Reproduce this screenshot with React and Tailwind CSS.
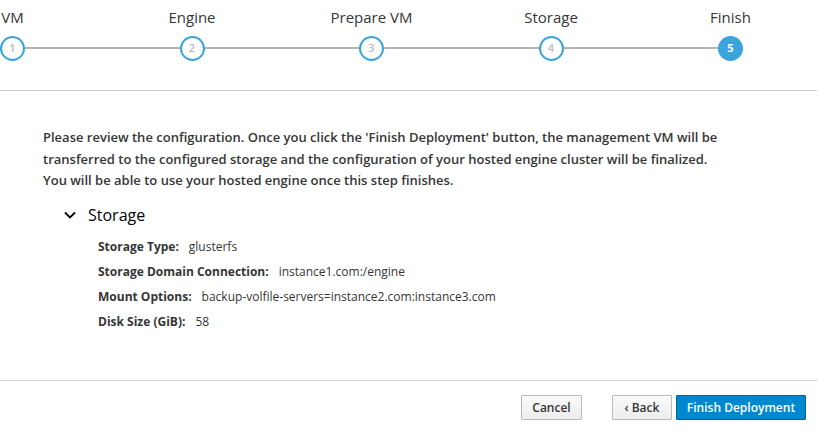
import React from "react";

const steps = ["VM", "Engine", "Prepare VM", "Storage", "Finish"];

function Step({ label, n, first, last, active }) {
  return (
    <div className="w-[179.5px] shrink-0 flex flex-col items-center">
      <div className="h-[20px] leading-[20px] text-[15px] text-[#363636] mt-[6.5px] whitespace-nowrap">{label}</div>
      <div className="w-full flex items-center mt-[9px]">
        <div className={`flex-1 h-[2px] ${first ? "bg-transparent" : "bg-[#b3b3b3]"}`} />
        {active ? (
          <div className="w-[25px] h-[25px] rounded-full bg-[#39a5dc] flex items-center justify-center text-white text-[11px] font-bold">
            {n}
          </div>
        ) : (
          <div className="w-[25px] h-[25px] rounded-full border-2 border-[#39a5dc] bg-white flex items-center justify-center text-[#bbbbbb] text-[11px] font-semibold">
            {n}
          </div>
        )}
        <div className={`flex-1 h-[2px] ${last ? "bg-transparent" : "bg-[#b3b3b3]"}`} />
      </div>
    </div>
  );
}

function Row({ label, value }) {
  return (
    <div className="h-[25px] flex items-center text-[12px] text-[#363636]">
      <span className="font-bold">{label}</span>
      <span className="ml-[10px]">{value}</span>
    </div>
  );
}

export default function App() {
  return (
    <div
      className="w-[817px] h-[433px] bg-white flex flex-col overflow-hidden"
      style={{ fontFamily: '"Open Sans", "Noto Sans", sans-serif' }}
    >
      <div className="h-[91px] shrink-0 border-b border-[#d1d1d1] overflow-hidden">
        <div className="flex -ml-[77.25px]">
          {steps.map((s, i) => (
            <Step key={s} label={s} n={i + 1} first={i === 0} last={i === steps.length - 1} active={i === 4} />
          ))}
        </div>
      </div>
      <div className="flex-1 pl-[43px] pt-[36px]">
        <p className="text-[13px] leading-[21.5px] font-semibold text-[#363636]">
          Please review the configuration. Once you click the 'Finish Deployment' button, the management VM will be
          <br />
          transferred to the configured storage and the configuration of your hosted engine cluster will be finalized.
          <br />
          You will be able to use your hosted engine once this step finishes.
        </p>
        <div className="mt-[11.5px] ml-[21px] flex items-center h-[24px] text-[16px] text-[#030303]">
          <svg width="12" height="8" viewBox="0 0 12 8" className="mr-[12px]">
            <path d="M1 1.5 L6 6.5 L11 1.5" fill="none" stroke="#030303" strokeWidth="1.8" />
          </svg>
          <span>Storage</span>
        </div>
        <div className="mt-[7.5px] pl-[55px]">
          <Row label="Storage Type:" value="glusterfs" />
          <Row label="Storage Domain Connection:" value="instance1.com:/engine" />
          <Row label="Mount Options:" value="backup-volfile-servers=instance2.com:instance3.com" />
          <Row label="Disk Size (GiB):" value="58" />
        </div>
      </div>
      <div className="h-[53px] shrink-0 border-t border-[#d1d1d1] flex items-start justify-end pr-[11px] pt-[14px]">
        <button className="h-[25px] w-[61px] border border-[#bbbbbb] bg-gradient-to-b from-[#fafafa] to-[#ededed] text-[12px] font-semibold text-[#363636] rounded-[1px]">
          Cancel
        </button>
        <button className="ml-[30px] h-[25px] w-[60px] border border-[#bbbbbb] bg-gradient-to-b from-[#fafafa] to-[#ededed] text-[12px] font-semibold text-[#363636] rounded-[1px]">
          ‹ Back
        </button>
        <button className="ml-[4px] h-[25px] w-[130px] border border-[#00659c] bg-[#0088ce] text-[12px] font-semibold text-white rounded-[1px]">
          Finish Deployment
        </button>
      </div>
    </div>
  );
}
